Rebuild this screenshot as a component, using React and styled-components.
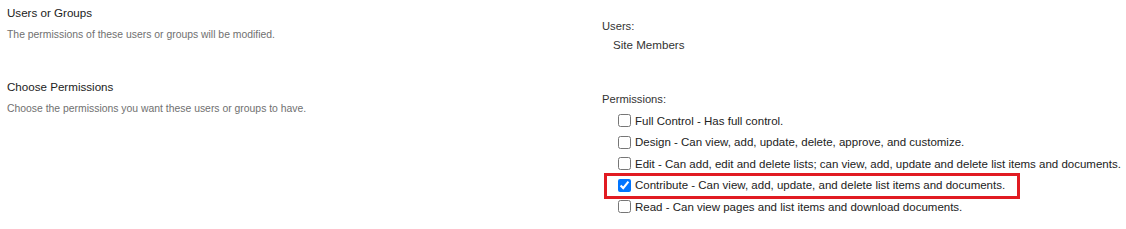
import React from 'react';
import styled, { createGlobalStyle } from 'styled-components';

const GlobalStyle = createGlobalStyle`
  body {
    margin: 0;
    background: #fff;
    font-family: "Segoe UI", "Liberation Sans", Arial, sans-serif;
  }
`;

const permissions = [
  { name: 'Full Control', text: 'Has full control.' },
  { name: 'Design', text: 'Can view, add, update, delete, approve, and customize.' },
  { name: 'Edit', text: 'Can add, edit and delete lists; can view, add, update and delete list items and documents.' },
  { name: 'Contribute', text: 'Can view, add, update, and delete list items and documents.', checked: true, marked: true },
  { name: 'Read', text: 'Can view pages and list items and download documents.' },
];

const App = () => {
  return (
    <>
      <GlobalStyle />
      <PageStyled>
        <SectionStyled $height={74}>
          <div>
            <TitleStyled>Users or Groups</TitleStyled>
            <DescStyled>The permissions of these users or groups will be modified.</DescStyled>
          </div>
          <FieldStyled $top={17}>
            <LabelStyled>Users:</LabelStyled>
            <ValueStyled>Site Members</ValueStyled>
          </FieldStyled>
        </SectionStyled>

        <SectionStyled>
          <div>
            <TitleStyled>Choose Permissions</TitleStyled>
            <DescStyled>Choose the permissions you want these users or groups to have.</DescStyled>
          </div>
          <FieldStyled $top={16}>
            <LabelStyled>Permissions:</LabelStyled>
            <ListStyled>
              {permissions.map((p) => (
                <RowStyled key={p.name} $marked={p.marked}>
                  <input type="checkbox" defaultChecked={!!p.checked} />
                  <span>{p.name} - {p.text}</span>
                </RowStyled>
              ))}
            </ListStyled>
          </FieldStyled>
        </SectionStyled>
      </PageStyled>
    </>
  );
};

// styled Components
const PageStyled = styled.div`
  width: 1126px;
  height: 229px;
  padding-left: 7px;
  box-sizing: border-box;
  overflow: hidden;
`;

const SectionStyled = styled.div`
  display: grid;
  grid-template-columns: 595px 1fr;
  height: ${(p) => (p.$height ? `${p.$height}px` : 'auto')};
`;

const TitleStyled = styled.div`
  padding-top: 4px;
  font-size: 11.6px;
  line-height: 18px;
  color: #222;
`;

const DescStyled = styled.div`
  margin-top: 4px;
  font-size: 10.4px;
  line-height: 18px;
  color: #707070;
`;

const FieldStyled = styled.div`
  padding-top: ${(p) => p.$top}px;
  color: #333;
  font-size: 11.2px;
`;

const LabelStyled = styled.div`
  line-height: 18px;
`;

const ValueStyled = styled.div`
  padding-left: 11px;
  line-height: 19px;
  font-size: 11.6px;
`;

const ListStyled = styled.div`
  padding-top: 2px;
  padding-left: 15px;
  display: flex;
  flex-direction: column;
  align-items: flex-start;
`;

const RowStyled = styled.label`
  position: relative;
  display: inline-flex;
  align-items: center;
  height: 21.5px;
  font-size: 11.5px;
  color: #222;
  white-space: nowrap;

  input {
    width: 13px;
    height: 13px;
    margin: 0 4px 0 1px;
  }

  &::after {
    content: '';
    display: ${(p) => (p.$marked ? 'block' : 'none')};
    position: absolute;
    left: -13px;
    right: -15px;
    top: -2px;
    bottom: -3px;
    border: 3.5px solid #e11b22;
    pointer-events: none;
  }
`;

export default App;
